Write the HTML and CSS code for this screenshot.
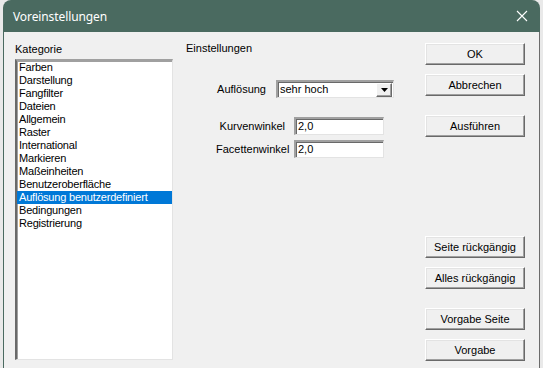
FILE: index.html
```html
<!DOCTYPE html>
<html lang="de">
<head>
<meta charset="utf-8">
<title>Voreinstellungen</title>
<link rel="stylesheet" href="styles.css">
</head>
<body>
<div class="window">
  <div class="titlebar">
    <span class="title">Voreinstellungen</span>
    <svg class="close" width="12" height="12" viewBox="0 0 12 12"><path d="M1 1 L11 11 M11 1 L1 11" stroke="#fff" stroke-width="1.1" fill="none"/></svg>
  </div>
  <div class="content">
    <div class="col-left">
      <div class="caption">Kategorie</div>
      <div class="listbox">
        <div class="item">Farben</div>
        <div class="item">Darstellung</div>
        <div class="item">Fangfilter</div>
        <div class="item">Dateien</div>
        <div class="item">Allgemein</div>
        <div class="item">Raster</div>
        <div class="item">International</div>
        <div class="item">Markieren</div>
        <div class="item">Maßeinheiten</div>
        <div class="item">Benutzeroberfläche</div>
        <div class="item selected">Auflösung benutzerdefiniert</div>
        <div class="item">Bedingungen</div>
        <div class="item">Registrierung</div>
      </div>
    </div>
    <div class="col-mid">
      <div class="caption">Einstellungen</div>
      <div class="row row-res">
        <span class="lbl">Auflösung</span>
        <div class="combo">
          <span class="combo-text">sehr hoch</span>
          <span class="combo-btn"><svg width="7" height="4" viewBox="0 0 7 4"><path d="M0 0 H7 L3.5 4 Z" fill="#000"/></svg></span>
        </div>
      </div>
      <div class="row row-angle first">
        <span class="lbl">Kurvenwinkel</span>
        <div class="field">2,0</div>
      </div>
      <div class="row row-angle">
        <span class="lbl">Facettenwinkel</span>
        <div class="field">2,0</div>
      </div>
    </div>
    <div class="col-right">
      <div class="btn">OK</div>
      <div class="btn">Abbrechen</div>
      <div class="btn gap-sm">Ausführen</div>
      <div class="btn gap-lg">Seite rückgängig</div>
      <div class="btn">Alles rückgängig</div>
      <div class="btn gap-sm">Vorgabe Seite</div>
      <div class="btn">Vorgabe</div>
    </div>
  </div>
</div>
</body>
</html>
```

FILE: styles.css
```css
html, body {
  margin: 0;
  padding: 0;
}
body {
  width: 543px;
  height: 368px;
  overflow: hidden;
  background: #e9e9e9;
  font-family: "Liberation Sans", Arial, sans-serif;
  font-size: 11px;
  color: #000;
}
.window {
  margin-left: 3px;
  width: 537px;
  height: 368px;
  background: #f0f0f0;
  border-radius: 8px 8px 0 0;
  overflow: hidden;
  display: flex;
  flex-direction: column;
}
.titlebar {
  height: 32px;
  flex: none;
  background: #4a6a60;
  display: flex;
  align-items: center;
  justify-content: space-between;
  padding: 0 12px 0 10px;
  color: #fff;
}
.title {
  font-family: "Noto Sans", "Open Sans", sans-serif;
  font-size: 12px;
  letter-spacing: -0.1px;
}
.close {
  display: block;
}
.content {
  flex: 1;
  display: flex;
  border-left: 1px solid #4a6a60;
  border-right: 1px solid #6b6b6b;
}
.caption {
  height: 13px;
  line-height: 13px;
  white-space: nowrap;
}
.col-left {
  padding: 11px 0 0 11px;
  width: 159px;
  flex: none;
}
.listbox {
  margin-top: 3px;
  height: 298px;
  width: 155px;
  background: #fff;
  border-top: 2px solid #a0a0a0;
  border-left: 2px solid #696969;
  border-right: 1px solid #e3e3e3;
  border-bottom: 1px solid #e3e3e3;
  box-shadow: inset 1px 1px 0 #a0a0a0;
}
.item {
  height: 13px;
  line-height: 13px;
  padding-left: 2px;
  white-space: nowrap;
  letter-spacing: -0.2px;
}
.item.selected {
  background: #0078d7;
  color: #fff;
}
.col-mid {
  padding: 10px 0 0 12px;
  width: 225px;
  flex: none;
}
.row {
  display: flex;
  align-items: center;
}
.lbl {
  white-space: nowrap;
  text-align: right;
}
.row-res {
  margin-top: 25px;
  padding-left: 30px;
}
.row-res .lbl {
  width: 50px;
  margin-right: 10px;
}
.combo {
  width: 113px;
  height: 15px;
  background: #fff;
  border-top: 2px solid #a0a0a0;
  border-left: 2px solid #a0a0a0;
  border-right: 1px solid #e3e3e3;
  border-bottom: 1px solid #e3e3e3;
  box-shadow: inset 1px 1px 0 #696969;
  display: flex;
  align-items: center;
  justify-content: space-between;
  padding-left: 2px;
}
.combo-text {
  line-height: 13px;
}
.combo-btn {
  width: 16px;
  height: 14px;
  margin-right: 1px;
  background: #f0f0f0;
  border-top: 1px solid #fff;
  border-left: 1px solid #fff;
  border-right: 1px solid #696969;
  border-bottom: 1px solid #696969;
  box-shadow: inset -1px -1px 0 #a0a0a0;
  box-sizing: border-box;
  display: flex;
  align-items: center;
  justify-content: center;
}
.combo-btn svg { display: block; }
.row-angle {
  margin-top: 5px;
  padding-left: 30px;
}
.row-angle.first {
  margin-top: 19px;
}
.row-angle .lbl {
  width: 69px;
  margin-right: 9px;
}
.field {
  width: 85px;
  height: 15px;
  line-height: 15px;
  background: #fff;
  border-top: 2px solid #a0a0a0;
  border-left: 2px solid #a0a0a0;
  border-right: 1px solid #e3e3e3;
  border-bottom: 1px solid #e3e3e3;
  box-shadow: inset 1px 1px 0 #696969;
  padding-left: 2px;
}
.col-right {
  padding: 11px 0 0 14px;
  display: flex;
  flex-direction: column;
}
.btn {
  width: 100px;
  height: 22px;
  box-sizing: border-box;
  margin-bottom: 9px;
  background: #f0f0f0;
  border-top: 1px solid #fff;
  border-left: 1px solid #fff;
  border-right: 1px solid #696969;
  border-bottom: 1px solid #696969;
  box-shadow: inset -1px -1px 0 #a0a0a0, inset 1px 1px 0 #e3e3e3;
  display: flex;
  align-items: center;
  justify-content: center;
  white-space: nowrap;
}
.btn.gap-sm {
  margin-top: 10px;
}
.btn.gap-lg {
  margin-top: 90px;
}
```
